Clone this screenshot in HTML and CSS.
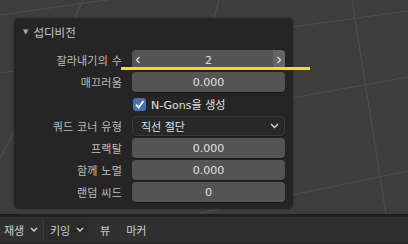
FILE: index.html
```html
<!DOCTYPE html>
<html lang="ko">
<head>
    <meta charset="UTF-8">
    <title>섭디비전</title>
    <link rel="stylesheet" href="styles.css">
</head>
<body>
    <div class="viewport">
        <!-- 뷰포트 그리드 -->
        <svg class="grid-lines" width="408" height="214" viewBox="0 0 408 214">
            <line x1="0" y1="15" x2="120" y2="-2" />
            <line x1="83" y1="0" x2="74" y2="20" />
            <line x1="219" y1="0" x2="213" y2="20" />
            <line x1="292" y1="27" x2="408" y2="11" />
            <line x1="292" y1="98" x2="408" y2="77" />
            <line x1="292" y1="195" x2="408" y2="171" />
            <line x1="200" y1="213" x2="294" y2="194" />
            <line x1="352" y1="0" x2="386" y2="214" />
            <line x1="0" y1="73" x2="14" y2="71" />
            <line x1="0" y1="158" x2="14" y2="132" />
        </svg>

        <div class="panel">
            <div class="panel-header">
                <span class="caret">▼</span>
                <span>섭디비전</span>
            </div>

            <div class="props">
                <div class="label">잘라내기의 수</div>
                <div class="field slider">
                    <span class="arrow left">
                        <svg width="6" height="8" viewBox="0 0 6 8"><path d="M4.5 1 L1.5 4 L4.5 7" /></svg>
                    </span>
                    <span class="value">2</span>
                    <span class="arrow right">
                        <svg width="6" height="8" viewBox="0 0 6 8"><path d="M1.5 1 L4.5 4 L1.5 7" /></svg>
                    </span>
                </div>

                <div class="label">매끄러움</div>
                <div class="field"><span class="value">0.000</span></div>

                <div class="label"></div>
                <div class="check-row">
                    <span class="checkbox">
                        <svg width="13" height="13" viewBox="0 0 13 13"><path d="M3 6.5 L5.5 9.5 L10.5 3" /></svg>
                    </span>
                    <span>N-Gons을 생성</span>
                </div>

                <div class="label">쿼드 코너 유형</div>
                <div class="field dropdown">
                    <span>직선 절단</span>
                    <svg width="9" height="6" viewBox="0 0 9 6"><path d="M1 1 L4.5 4.5 L8 1" /></svg>
                </div>

                <div class="label">프랙탈</div>
                <div class="field"><span class="value">0.000</span></div>

                <div class="label">함께 노멀</div>
                <div class="field"><span class="value">0.000</span></div>

                <div class="label">랜덤 씨드</div>
                <div class="field"><span class="value">0</span></div>
            </div>
        </div>

        <div class="highlight"></div>
    </div>

    <div class="timeline-bar">
        <div class="menu-group">
            <span class="menu-item first">재생 <svg width="8" height="5" viewBox="0 0 8 5"><path d="M1 1 L4 4 L7 1" /></svg></span>
            <span class="menu-item boxed">키잉 <svg width="8" height="5" viewBox="0 0 8 5"><path d="M1 1 L4 4 L7 1" /></svg></span>
        </div>
        <span class="menu-item view">뷰</span>
        <span class="menu-item">마커</span>
    </div>
</body>
</html>
```

FILE: styles.css
```css
* {
    margin: 0;
    padding: 0;
    box-sizing: border-box;
}

body {
    width: 408px;
    height: 244px;
    overflow: hidden;
    background: #3d3d3d;
    font-family: "DejaVu Sans", "Noto Sans CJK KR", sans-serif;
    font-size: 11px;
    color: #c4c4c4;
}

.viewport {
    position: relative;
    height: 214px;
    padding: 18px 0 0 14px;
    background: #3d3d3d;
}

.grid-lines {
    position: absolute;
    top: 0;
    left: 0;
}

.grid-lines line {
    stroke: #4e4e4e;
    stroke-width: 1.2;
}

.panel {
    position: relative;
    width: 279px;
    height: 191px;
    background: #252525;
    border-radius: 5px;
    box-shadow: 0 0 2px rgba(0, 0, 0, 0.4);
}

.panel-header {
    display: flex;
    align-items: center;
    gap: 5px;
    height: 27px;
    padding: 0 0 0 9px;
    color: #c8c8c8;
    font-size: 11.5px;
}

.caret {
    font-size: 7px;
    color: #a8a8a8;
}

.props {
    display: grid;
    grid-template-columns: 100px 153px;
    grid-auto-rows: 20px;
    column-gap: 10px;
    row-gap: 2px;
    padding: 5px 8px 0 8px;
}

.label {
    display: flex;
    align-items: center;
    justify-content: flex-end;
    color: #bdbdbd;
    letter-spacing: 0.2px;
}

.field {
    display: flex;
    align-items: center;
    justify-content: center;
    background: #545454;
    border-radius: 4px;
    color: #e2e2e2;
    box-shadow: 0 1px 1px rgba(0, 0, 0, 0.35);
}

.slider {
    justify-content: space-between;
    overflow: hidden;
}

.arrow {
    display: flex;
    align-items: center;
    justify-content: center;
    width: 12px;
    height: 100%;
}

.arrow.right {
    background: #666666;
}

.arrow path,
.dropdown path,
.menu-item path {
    fill: none;
    stroke: #dcdcdc;
    stroke-width: 1.3;
}

.check-row {
    display: flex;
    align-items: center;
    gap: 5px;
    padding-left: 1px;
    color: #e0e0e0;
}

.checkbox {
    display: flex;
    width: 13px;
    height: 13px;
    background: #4772b3;
    border-radius: 3px;
}

.checkbox path {
    fill: none;
    stroke: #ffffff;
    stroke-width: 1.8;
}

.dropdown {
    justify-content: space-between;
    padding: 0 5px 0 8px;
    background: #282828;
    border: 1px solid #3b3b3b;
}

.highlight {
    position: absolute;
    left: 121px;
    top: 67px;
    width: 189px;
    height: 3px;
    background: #f5e400;
}

.timeline-bar {
    display: flex;
    align-items: center;
    height: 30px;
    border-top: 3px solid #1f1f1f;
    border-bottom: 2px solid #282828;
    background: #303030;
    color: #d0d0d0;
    white-space: nowrap;
}

.menu-group {
    display: flex;
    height: 21px;
    margin-right: 9px;
}

.menu-item {
    display: flex;
    align-items: center;
    flex-shrink: 0;
    gap: 6px;
    padding: 0 3px;
}

.menu-item.first {
    width: 43px;
    padding-left: 4px;
}

.menu-item.boxed {
    width: 45px;
    padding: 0 2px 0 6px;
    background: #2b2b2b;
    border-left: 1px solid #3d3d3d;
    border-radius: 0 4px 4px 0;
}

.menu-item.view {
    margin-right: 10px;
}
```
